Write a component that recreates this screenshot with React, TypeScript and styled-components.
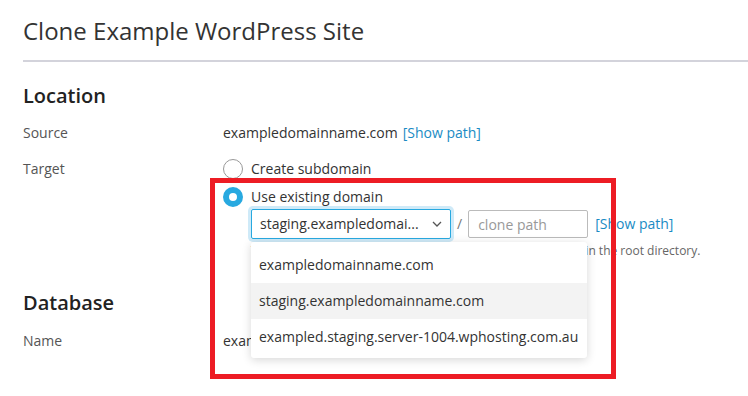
import React from "react";
import styled, { createGlobalStyle } from "styled-components";

const GlobalStyle = createGlobalStyle`
  html, body {
    margin: 0;
    padding: 0;
    background: #fff;
  }
  body {
    font-family: "Open Sans", "Noto Sans", Arial, sans-serif;
    color: #333;
    width: 748px;
    height: 396px;
    overflow: hidden;
  }
`;

const Page = styled.div`
  position: relative;
  padding: 14px 0 0 23px;
  height: 396px;
  box-sizing: border-box;
`;

const Title = styled.h1`
  margin: 0;
  font-size: 24px;
  font-weight: 400;
  line-height: 34px;
  color: #333;
`;

const Divider = styled.hr`
  margin: 12px 0 0;
  border: 0;
  border-top: 2px solid #d3d3db;
`;

const SectionTitle = styled.h2<{ $top: number }>`
  margin: ${(p) => p.$top}px 0 0;
  font-size: 20px;
  font-weight: 600;
  line-height: 28px;
  color: #222;
`;

const Row = styled.div<{ $top: number }>`
  display: flex;
  align-items: flex-start;
  margin-top: ${(p) => p.$top}px;
  font-size: 14px;
  line-height: 20px;
`;

const Label = styled.div`
  width: 200px;
  flex: none;
  color: #555;
`;

const Value = styled.div`
  display: flex;
  flex-direction: column;
  color: #333;
`;

const Link = styled.a<{ $gap: number }>`
  color: #1a8bc4;
  text-decoration: none;
  margin-left: ${(p) => p.$gap}px;
`;

const RadioLine = styled.label<{ $first?: boolean }>`
  display: flex;
  align-items: center;
  gap: 8px;
  height: 28px;
  margin-top: ${(p) => (p.$first ? -4 : 0)}px;
  color: #333;
`;

const RadioDot = styled.span<{ $checked?: boolean }>`
  width: 20px;
  height: 20px;
  box-sizing: border-box;
  border-radius: 50%;
  flex: none;
  border: ${(p) => (p.$checked ? "6px solid #28a9e0" : "1px solid #999")};
  background: #fff;
`;

const Controls = styled.div`
  position: relative;
  margin-left: 28px;
  margin-top: -2px;
`;

const FieldLine = styled.div`
  display: flex;
  align-items: center;
`;

const Select = styled.div`
  display: flex;
  align-items: center;
  justify-content: space-between;
  box-sizing: border-box;
  width: 200px;
  height: 30px;
  padding: 0 8px 0 8px;
  border: 1px solid #28a9e0;
  border-radius: 2px;
  box-shadow: 0 0 0 3px #cfeaf8;
  color: #333;
  font-size: 14px;
`;

const Slash = styled.span`
  color: #777;
  margin: 0 6px 0 6px;
`;

const Input = styled.input`
  box-sizing: border-box;
  width: 120px;
  height: 28px;
  padding: 0 9px;
  border: 1px solid #bbb;
  border-radius: 2px;
  font-family: inherit;
  font-size: 14px;
  color: #333;
  &::placeholder {
    color: #999;
  }
`;

const Help = styled.div`
  margin-top: 4px;
  font-size: 12px;
  line-height: 16px;
  color: #666;
  white-space: nowrap;
`;

const Menu = styled.ul`
  position: absolute;
  left: 0;
  top: 33px;
  width: 336px;
  margin: 0;
  padding: 5px 0 3px;
  list-style: none;
  background: #fff;
  border-radius: 3px;
  box-shadow: 0 2px 10px rgba(0, 0, 0, 0.16);
  z-index: 2;
`;

const MenuItem = styled.li<{ $active?: boolean }>`
  height: 36px;
  line-height: 36px;
  padding: 0 8px;
  font-size: 14px;
  color: #333;
  white-space: nowrap;
  background: ${(p) => (p.$active ? "#f3f3f3" : "#fff")};
`;

const Highlight = styled.div`
  position: absolute;
  left: 210px;
  top: 178px;
  width: 406px;
  height: 201px;
  box-sizing: border-box;
  border: 5px solid #ed1c24;
  pointer-events: none;
  z-index: 3;
`;

const Chevron = () => (
  <svg width="10" height="6" viewBox="0 0 10 6" fill="none">
    <path d="M1 1l4 4 4-4" stroke="#555" strokeWidth="1.3" />
  </svg>
);

const domains = [
  "exampledomainname.com",
  "staging.exampledomainname.com",
  "exampled.staging.server-1004.wphosting.com.au",
];

export default function App() {
  return (
    <>
      <GlobalStyle />
      <Page>
        <Title>Clone Example WordPress Site</Title>
        <Divider />
        <SectionTitle $top={20}>Location</SectionTitle>
        <Row $top={13}>
          <Label>Source</Label>
          <Value>
            <span>
              exampledomainname.com<Link $gap={5}>[Show path]</Link>
            </span>
          </Value>
        </Row>
        <Row $top={16}>
          <Label>Target</Label>
          <Value>
            <RadioLine $first>
              <RadioDot />
              Create subdomain
            </RadioLine>
            <RadioLine>
              <RadioDot $checked />
              Use existing domain
            </RadioLine>
            <Controls>
              <FieldLine>
                <Select>
                  <span>staging.exampledomai...</span>
                  <Chevron />
                </Select>
                <Slash>/</Slash>
                <Input placeholder="clone path" />
                <Link $gap={7}>[Show path]</Link>
              </FieldLine>
              <Help>
                The site's files will be copied to the specified target domain, in the root directory.
              </Help>
              <Menu>
                {domains.map((d, i) => (
                  <MenuItem key={d} $active={i === 1}>
                    {d}
                  </MenuItem>
                ))}
              </Menu>
            </Controls>
          </Value>
        </Row>
        <SectionTitle $top={30}>Database</SectionTitle>
        <Row $top={14}>
          <Label>Name</Label>
          <Value>exampled_wp_clone</Value>
        </Row>
        <Highlight />
      </Page>
    </>
  );
}
